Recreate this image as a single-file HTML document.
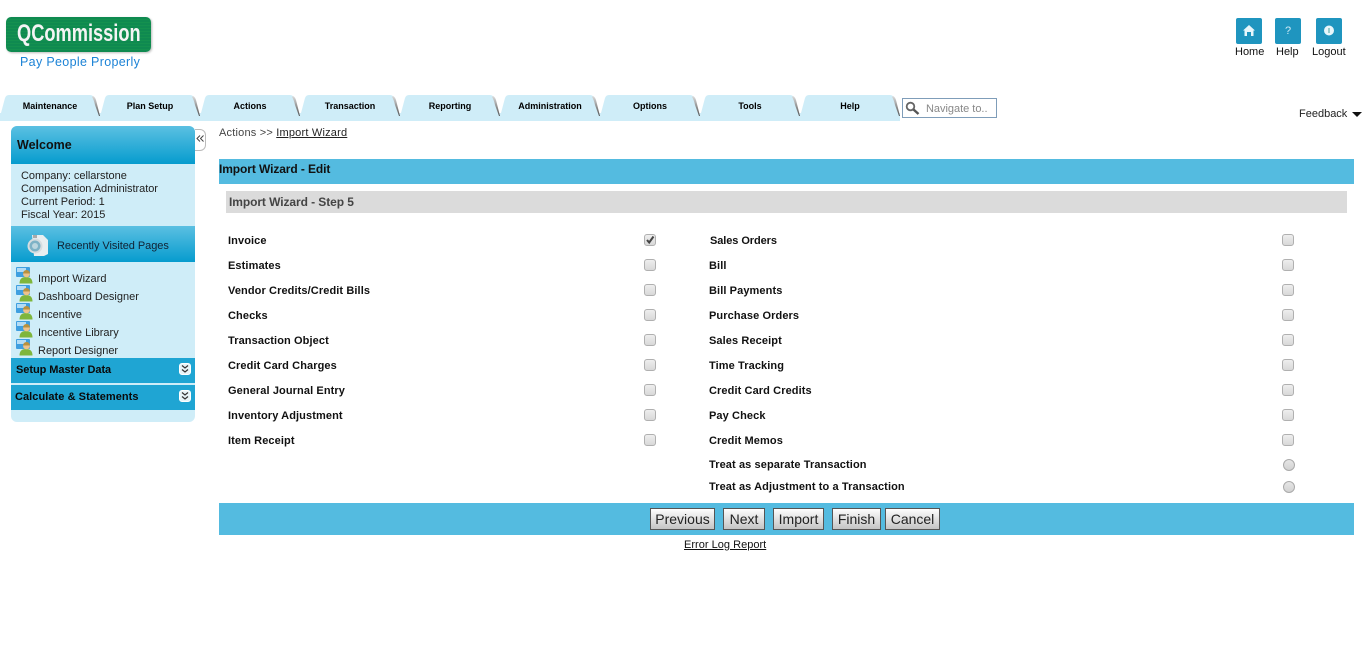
<!DOCTYPE html>
<html><head><meta charset="utf-8"><title>Import Wizard</title>
<style>
html,body{margin:0;padding:0;background:#fff;width:1366px;height:667px;overflow:hidden}
body{font-family:"Liberation Sans",Arial,sans-serif;color:#111;position:relative}
.a{position:absolute;white-space:nowrap}
.tab{position:absolute;top:95px;width:100px;height:26px}
.tab svg{position:absolute;left:0;top:0}
.tab span{position:absolute;left:0;width:100px;top:5px;text-align:center;font:bold 9px/12px "Liberation Sans",sans-serif;color:#000}
.tb{position:absolute;top:18px;width:26px;height:26px;background:#1f95bf;border-radius:2px}
.tl{position:absolute;top:46px;font-size:11px;line-height:13px;color:#111}
.l{position:absolute;font:bold 11px/13px "Liberation Sans",sans-serif;letter-spacing:.1px;color:#111;white-space:nowrap}
.c{position:absolute;width:10px;height:10px;border:1px solid #b0b0b0;border-radius:3px;background:linear-gradient(#eee,#d8d8d8)}
.r{position:absolute;left:1283px;width:10px;height:10px;border:1px solid #aaa;border-radius:50%;background:linear-gradient(#e6e6e6,#d2d2d2)}
.b{position:absolute;top:508px;height:22px;box-sizing:border-box;border:1px solid #555;background:linear-gradient(#fdfdfd,#c4c4c4);font:14px/20px "Liberation Sans",sans-serif;color:#222;text-align:center}
.sb{position:absolute;font-size:11px;line-height:13px;color:#222;white-space:nowrap}
.ic{position:absolute;left:16px;width:17px;height:17px}
.dd{position:absolute;left:179px;width:10px;height:10px;background:#e8f4f8;border:1px solid #fff;border-radius:3px}
</style></head><body>

<!-- Logo -->
<div class="a" style="left:6px;top:17px;width:145px;height:35px;background:repeating-linear-gradient(#0f8a50 0 2px,#14914f 2px 3px);border-radius:5px;box-shadow:1px 1px 2px #bbb"></div>
<div class="a" style="left:17px;top:17px;height:35px;color:#f4f4f4;font:bold 24px/34px 'Liberation Sans',sans-serif;transform:scaleX(.76);transform-origin:0 0">QCommission</div>
<div class="a" style="left:20px;top:55px;color:#1c83d6;font-size:12.5px;line-height:15px;letter-spacing:.33px">Pay People Properly</div>

<!-- Top right -->
<div class="tb" style="left:1236px"><svg width="26" height="26"><path d="M13 7L7 12.500h1.500V18h9v-5.500H19z" fill="#e8f6fb"/><rect x="11" y="14" width="4" height="4" fill="#1f95bf"/></svg></div>
<div class="tb" style="left:1275px;color:#cdeaf5;font-size:11px;line-height:27px;text-align:center">?</div>
<div class="tb" style="left:1316px"><svg width="26" height="26"><circle cx="13" cy="12.500" r="5" fill="#e8f6fb"/><rect x="12" y="10" width="2" height="5" fill="#9cc"/></svg></div>
<div class="tl" style="left:1235px">Home</div>
<div class="tl" style="left:1276px">Help</div>
<div class="tl" style="left:1312px">Logout</div>

<!-- Tabs -->
<div class="a" style="left:0;top:113px;width:900px;height:8px;background:#cfedf8"></div>
<svg width="0" height="0" style="position:absolute"><defs>
<linearGradient id="g" x1="0" y1="0" x2="0" y2="1"><stop offset="0" stop-color="#ddd"/><stop offset=".6" stop-color="#888"/><stop offset="1" stop-color="#555"/></linearGradient>
<symbol id="t" viewBox="0 0 100 26"><path d="M0 26V20L1 18 5 3Q6 0 9 0H90Q93 0 94 3L98 18 100 26Z" fill="#cfedf8"/><path d="M93 1Q95 2 96 5L100 21H99L95 10Q94 5 92 2Z" fill="url(#g)"/></symbol>
<symbol id="u" viewBox="0 0 17 17"><rect x="0" y="0" width="14" height="10" rx="1" fill="#3f9fe0"/><rect x="1" y="1" width="9" height="4" fill="#b2dcf6"/><path d="M3.500 16.500Q3.500 10 10 10T16.500 16.500Z" fill="#7fb63c"/><circle cx="10.500" cy="7" r="3.400" fill="#eec28c"/><path d="M7 6.500a3.500 3.500 0 0 1 7 0z" fill="#b9913f"/></symbol>
</defs></svg>
<div class="tab" style="left:0"><svg width="100" height="26"><use href="#t"/></svg><span>Maintenance</span></div>
<div class="tab" style="left:100px"><svg width="100" height="26"><use href="#t"/></svg><span>Plan Setup</span></div>
<div class="tab" style="left:200px"><svg width="100" height="26"><use href="#t"/></svg><span>Actions</span></div>
<div class="tab" style="left:300px"><svg width="100" height="26"><use href="#t"/></svg><span>Transaction</span></div>
<div class="tab" style="left:400px"><svg width="100" height="26"><use href="#t"/></svg><span>Reporting</span></div>
<div class="tab" style="left:500px"><svg width="100" height="26"><use href="#t"/></svg><span>Administration</span></div>
<div class="tab" style="left:600px"><svg width="100" height="26"><use href="#t"/></svg><span>Options</span></div>
<div class="tab" style="left:700px"><svg width="100" height="26"><use href="#t"/></svg><span>Tools</span></div>
<div class="tab" style="left:800px"><svg width="100" height="26"><use href="#t"/></svg><span>Help</span></div>

<!-- Search -->
<div class="a" style="left:902px;top:98px;width:93px;height:18px;border:1px solid #7f9db9;background:#fff"></div>
<svg class="a" style="left:905px;top:101px" width="16" height="15"><circle cx="5.500" cy="5.500" r="3.800" fill="none" stroke="#666" stroke-width="1.800"/><path d="M8.500 8.500L13.500 13" stroke="#555" stroke-width="2.400"/></svg>
<div class="a" style="left:926px;top:103px;font-size:11px;line-height:13px;letter-spacing:-.02px;color:#888">Navigate to..</div>

<!-- Feedback -->
<div class="a" style="left:1299px;top:107px;font-size:11px;line-height:14px;color:#222">Feedback</div>
<div class="a" style="left:1352px;top:112px;width:0;height:0;border-left:5px solid transparent;border-right:5px solid transparent;border-top:5px solid #111"></div>

<!-- Sidebar -->
<div class="a" style="left:11px;top:126px;width:184px;height:296px;background:#cfedf8;border-radius:6px"></div>
<div class="a" style="left:11px;top:126px;width:184px;height:38px;background:linear-gradient(#5bc0e2,#069cce);border-radius:6px 6px 0 0"></div>
<div class="a" style="left:17px;top:138px;font-size:12.5px;line-height:15px;font-weight:bold;color:#111">Welcome</div>
<div class="sb" style="left:21px;top:170px;letter-spacing:-.03px">Company: cellarstone</div>
<div class="sb" style="left:21px;top:183px;letter-spacing:-.05px">Compensation Administrator</div>
<div class="sb" style="left:21px;top:196px;">Current Period: 1</div>
<div class="sb" style="left:21px;top:209px;">Fiscal Year: 2015</div>
<div class="a" style="left:11px;top:226px;width:184px;height:36px;background:linear-gradient(#5bc0e2,#069cce)"></div>
<svg class="a" style="left:26px;top:233px" width="24" height="25"><path d="M6 2H17L22 7V21L18 23H8Z" fill="#e8eef0"/><circle cx="9" cy="13" r="6.500" fill="#7eb2c6" stroke="#d7dde0" stroke-width="2"/><circle cx="9" cy="13" r="3" fill="#bcd6df"/><rect x="7" y="2" width="4" height="3" fill="#aaa"/></svg>
<div class="sb" style="left:57px;top:240px;letter-spacing:-.05px;color:#123">Recently Visited Pages</div>

<svg class="ic" style="top:267px"><use href="#u"/></svg>
<svg class="ic" style="top:285px"><use href="#u"/></svg>
<svg class="ic" style="top:303px"><use href="#u"/></svg>
<svg class="ic" style="top:321px"><use href="#u"/></svg>
<svg class="ic" style="top:339px"><use href="#u"/></svg>
<div class="sb" style="left:38px;top:273px;">Import Wizard</div>
<div class="sb" style="left:38px;top:291px;">Dashboard Designer</div>
<div class="sb" style="left:38px;top:309px;">Incentive</div>
<div class="sb" style="left:38px;top:327px;">Incentive Library</div>
<div class="sb" style="left:38px;top:345px;">Report Designer</div>

<div class="a" style="left:11px;top:358px;width:184px;height:25px;background:#1fa5d3"></div>
<div class="a" style="left:11px;top:385px;width:184px;height:25px;background:#1fa5d3"></div>
<div class="l" style="left:16px;top:364px;color:#0a0a0a;letter-spacing:-.05px">Setup Master Data</div>
<div class="l" style="left:15px;top:391px;color:#0a0a0a;letter-spacing:.06px">Calculate &amp; Statements</div>
<div class="dd" style="top:363px"><svg width="10" height="10" style="display:block"><path d="M2 1.500l3 2.500 3-2.500M2 5.500l3 2.500 3-2.500" fill="none" stroke="#333" stroke-width="1.200"/></svg></div>
<div class="dd" style="top:390px"><svg width="10" height="10" style="display:block"><path d="M2 1.500l3 2.500 3-2.500M2 5.500l3 2.500 3-2.500" fill="none" stroke="#333" stroke-width="1.200"/></svg></div>

<!-- Collapse -->
<div class="a" style="left:195px;top:129px;width:10px;height:20px;border:1px solid #bbb;border-left:0;border-radius:0 6px 6px 0;background:#fff"></div>
<svg class="a" style="left:196px;top:134px" width="9" height="10"><path d="M4 1.500L1 4.500l3 3M7.500 1.500L4.500 4.500l3 3" fill="none" stroke="#444" stroke-width="1"/></svg>

<!-- Breadcrumb -->
<div class="a" style="left:219px;top:127px;font-size:11px;line-height:13px;color:#444;letter-spacing:.2px">Actions &gt;&gt; <span style="color:#222;text-decoration:underline;">Import Wizard</span></div>

<!-- Headers -->
<div class="a" style="left:219px;top:159px;width:1135px;height:25px;background:#54bbe0"></div>
<div class="a" style="left:219px;top:162px;font:bold 12px/15px 'Liberation Sans',sans-serif;color:#111;letter-spacing:-.1px">Import Wizard - Edit</div>
<div class="a" style="left:226px;top:191px;width:1121px;height:22px;background:#dbdbdb"></div>
<div class="a" style="left:229px;top:195px;font:bold 12px/15px 'Liberation Sans',sans-serif;color:#444;letter-spacing:-.08px">Import Wizard - Step 5</div>

<!-- Left labels -->
<div class="l" style="left:228px;top:235px">Invoice</div>
<div class="l" style="left:228px;top:260px">Estimates</div>
<div class="l" style="left:228px;top:285px">Vendor Credits/Credit Bills</div>
<div class="l" style="left:228px;top:310px">Checks</div>
<div class="l" style="left:228px;top:335px">Transaction Object</div>
<div class="l" style="left:228px;top:360px">Credit Card Charges</div>
<div class="l" style="left:228px;top:385px">General Journal Entry</div>
<div class="l" style="left:228px;top:410px">Inventory Adjustment</div>
<div class="l" style="left:228px;top:435px">Item Receipt</div>

<!-- Left checks -->
<div class="c" style="left:644px;top:234px"><svg width="10" height="10" style="display:block"><path d="M2 5l2.200 2.500L8.500 1.500" fill="none" stroke="#444" stroke-width="2"/></svg></div>
<div class="c" style="left:644px;top:259px"></div>
<div class="c" style="left:644px;top:284px"></div>
<div class="c" style="left:644px;top:309px"></div>
<div class="c" style="left:644px;top:334px"></div>
<div class="c" style="left:644px;top:359px"></div>
<div class="c" style="left:644px;top:384px"></div>
<div class="c" style="left:644px;top:409px"></div>
<div class="c" style="left:644px;top:434px"></div>

<!-- Right labels -->
<div class="l" style="left:710px;top:235px;letter-spacing:-.08px">Sales Orders</div>
<div class="l" style="left:709px;top:260px">Bill</div>
<div class="l" style="left:709px;top:285px">Bill Payments</div>
<div class="l" style="left:709px;top:310px">Purchase Orders</div>
<div class="l" style="left:709px;top:335px">Sales Receipt</div>
<div class="l" style="left:709px;top:360px">Time Tracking</div>
<div class="l" style="left:709px;top:385px">Credit Card Credits</div>
<div class="l" style="left:709px;top:410px">Pay Check</div>
<div class="l" style="left:709px;top:435px">Credit Memos</div>
<div class="l" style="left:709px;top:459px">Treat as separate Transaction</div>
<div class="l" style="left:709px;top:481px">Treat as Adjustment to a Transaction</div>

<!-- Right checks -->
<div class="c" style="left:1282px;top:234px"></div>
<div class="c" style="left:1282px;top:259px"></div>
<div class="c" style="left:1282px;top:284px"></div>
<div class="c" style="left:1282px;top:309px"></div>
<div class="c" style="left:1282px;top:334px"></div>
<div class="c" style="left:1282px;top:359px"></div>
<div class="c" style="left:1282px;top:384px"></div>
<div class="c" style="left:1282px;top:409px"></div>
<div class="c" style="left:1282px;top:434px"></div>
<div class="r" style="top:459px"></div>
<div class="r" style="top:481px"></div>

<!-- Footer bar -->
<div class="a" style="left:219px;top:503px;width:1135px;height:32px;background:#54bbe0"></div>
<div class="b" style="left:650px;width:65px">Previous</div>
<div class="b" style="left:723px;width:42px">Next</div>
<div class="b" style="left:773px;width:51px">Import</div>
<div class="b" style="left:832px;width:49px">Finish</div>
<div class="b" style="left:885px;width:55px">Cancel</div>
<div class="a" style="left:684px;top:539px;font-size:11px;line-height:13px;letter-spacing:.02px;color:#111;text-decoration:underline">Error Log Report</div>

</body></html>
